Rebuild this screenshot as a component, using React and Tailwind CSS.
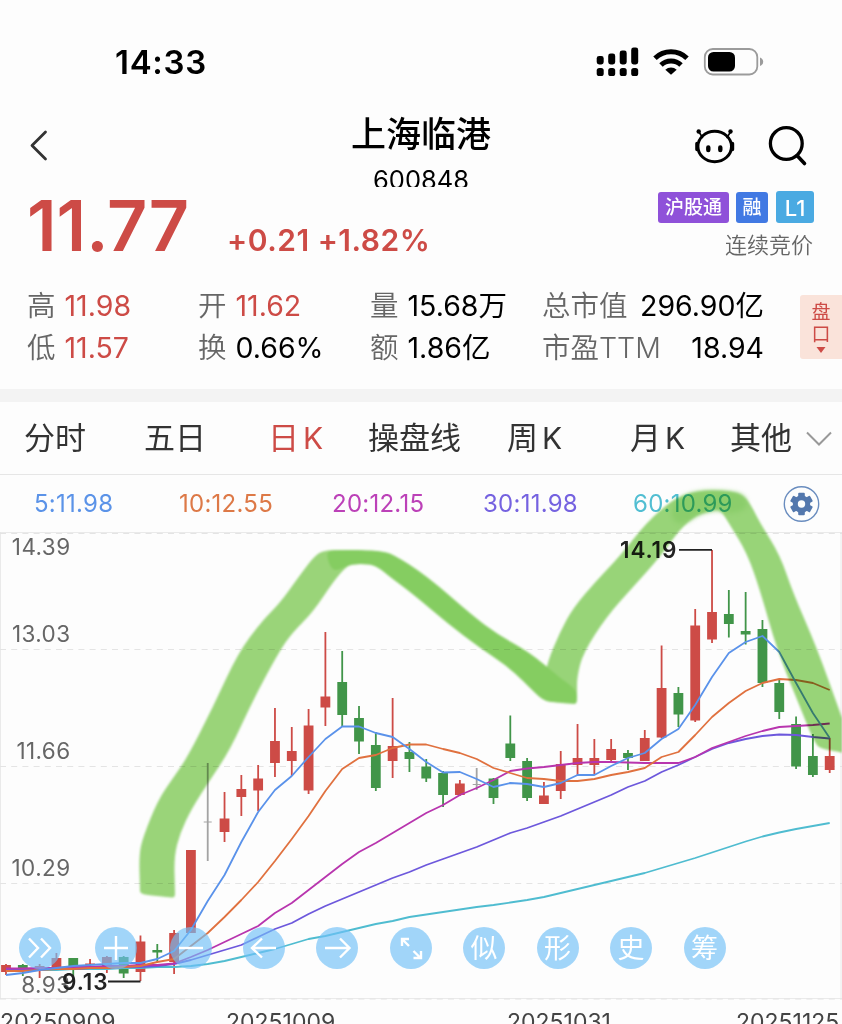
const badges = [
  { label: "沪股通", className: "w-[71px] h-[31px] bg-[#8f51d9]" },
  { label: "融", className: "mr-px w-8 h-[31px] bg-[#4179e3]" },
  { label: "L1", className: "w-[38px] h-8 bg-[#4aaae2] text-[22px]" },
];

const tabs = [
  { label: "分时", className: "w-[120px]" },
  { label: "五日", className: "w-[124px]" },
  { label: "日", k: true, className: "w-[100px] text-[#cd4b46]" },
  { label: "操盘线", className: "w-[139px]" },
  { label: "周", k: true, className: "w-[123px]" },
  { label: "月", k: true, className: "w-[100px]" },
  { label: "其他", className: "w-[75px]" },
];

const averages = [
  { label: "5:11.98", className: "w-[145px] text-[#5b93e8]" },
  { label: "10:12.55", className: "w-[153px] text-[#dd7947]" },
  { label: "20:12.15", className: "w-[151px] text-[#bc41b8]" },
  { label: "30:11.98", className: "w-[150px] text-[#7562e0]" },
  { label: "60:10.99", className: "w-[150px] text-[#51bed2]" },
];

// [color, high, body top, body bottom, low]
const candles = [
  ["r", 964, 965, 972, 975],
  ["g", 964, 965, 970, 976],
  ["r", 964, 966, 970, 978],
  ["r", 953, 958, 968, 969],
  ["g", 958, 958, 967, 976],
  ["r", 959, 963.5, 965, 968],
  ["r", 956, 957, 966, 973],
  ["g", 956, 957, 973.5, 978],
  ["r", 935.5, 941.5, 972, 981],
  ["g", 944, 950, 952.5, 962],
  ["r", 930, 933, 962, 974],
  ["r", 850, 850, 933, 933],
  ["n", 763, 821.5, 822.5, 861],
  ["r", 792, 818.5, 832, 842],
  ["r", 775, 789, 797, 816],
  ["r", 765, 778.5, 790.5, 811],
  ["r", 708, 741, 763, 777],
  ["r", 727, 751, 761, 776],
  ["r", 709, 725.5, 790.5, 794],
  ["r", 632, 696.5, 707.5, 726],
  ["g", 651, 682, 715, 727],
  ["g", 706, 718, 741.5, 754],
  ["g", 732, 745, 788, 791],
  ["r", 698, 746, 761, 778],
  ["g", 742, 752, 759, 772],
  ["g", 759, 766.5, 778.5, 782],
  ["g", 771, 773, 795, 807],
  ["r", 780, 783.5, 795, 796],
  ["n", 768, 784, 785, 790],
  ["g", 778, 778.5, 798, 804],
  ["g", 715.5, 743.5, 758, 761],
  ["g", 758, 761, 798, 801],
  ["r", 782, 795.5, 804, 804],
  ["r", 751, 764, 791, 799],
  ["r", 724, 758, 765, 775],
  ["r", 739, 758, 765, 775],
  ["r", 739, 749, 760, 763],
  ["g", 750, 753, 758, 770],
  ["r", 730, 738, 761, 761],
  ["r", 645.5, 688, 737.5, 738],
  ["g", 687, 693, 714.5, 727],
  ["r", 609, 625.5, 720.5, 722],
  ["r", 550, 612, 639.5, 643],
  ["g", 590, 614, 624, 637.5],
  ["g", 592, 631, 634.5, 644.5],
  ["g", 620, 629, 683, 687],
  ["g", 679, 683, 712, 719],
  ["g", 716.5, 724, 766.5, 769],
  ["g", 734, 756, 775, 777],
  ["r", 738, 756, 770, 773],
];

const candleColors = { r: "#cd4b46", g: "#419549", n: "#a3a3a3" };

const lines = [
  {
    color: "#4fbcd0",
    points: [
      970, 970, 970, 970, 969, 969, 969, 968, 968, 967, 967, 966, 964, 961,
      957, 953, 949, 944, 939, 936, 932, 928, 924, 921, 917, 914.5, 912, 909.5,
      907, 905, 902.5, 900, 897, 893, 889, 885, 881, 877, 873, 868, 863, 858,
      852.5, 847, 841.5, 836.5, 832.5, 829, 826, 823,
    ],
  },
  {
    color: "#6d58dc",
    points: [
      969, 969, 969, 969, 969, 968, 968, 967, 967, 966, 964, 960, 955, 950, 945,
      937, 929, 923, 914, 906, 899, 892, 885, 878, 872, 865, 859, 853, 847, 840,
      833, 828, 822, 816, 809, 802, 795, 787, 781, 772, 765, 757, 749, 743, 739,
      736, 734.5, 735, 737, 738.5,
    ],
  },
  {
    color: "#b835ae",
    points: [
      968.5, 968.5, 968, 968, 967, 967, 966, 966, 965, 965, 963.5, 957, 950,
      942, 934, 926, 913, 903, 890, 877, 864, 852, 843, 833, 823, 813, 805, 795,
      788, 780, 771, 768.5, 767, 765, 763, 762, 762, 762.5, 763, 763, 763, 757,
      748, 742, 736, 731, 727, 726, 725, 723.5,
    ],
  },
  {
    color: "#e0713f",
    points: [
      971, 971, 970, 969, 969, 968, 968, 967, 966, 962, 959, 946, 933, 917, 900,
      882, 861, 839, 816, 791, 769, 758, 755, 748, 744.5, 744.5, 749, 753, 759,
      768, 773, 778, 779, 781, 781, 779, 775, 772, 768, 757, 752, 735, 717, 703,
      691, 683, 679, 680, 683, 690,
    ],
  },
  {
    color: "#5a92ea",
    points: [
      975, 973, 970, 968, 966, 965, 964, 963, 963, 959, 951, 930, 901, 875, 842,
      812, 790, 776, 757, 739, 726.5, 726.5, 733, 737, 749, 762, 772.5, 772,
      779, 787, 783, 784, 787, 783, 775, 775, 766, 758, 753, 739, 729, 705, 677,
      653, 642, 636, 652, 683, 713, 738,
    ],
  },
];

const priceLabels = [
  { label: "14.39", x: 70.5, y: 555 },
  { label: "13.03", x: 70.5, y: 642 },
  { label: "11.66", x: 70.5, y: 759 },
  { label: "10.29", x: 70.5, y: 876 },
  { label: "8.93", x: 70.5, y: 992.5 },
];

const gridRows = [533.5, 649.5, 766.5, 883.5, 999];

const xOf = (index) => 6 + index * 16.81;

const StatusBar = () => (
  <div className="flex h-[94px] items-start pl-[115px] pt-[42px]">
    <span className="w-[481px] text-[33px] font-semibold leading-[41px] tracking-[0.7px] text-black">
      14:33
    </span>
    <svg width="170" height="40" viewBox="596 42 170 40">
      {[0, 1, 2, 3].map((i) => (
        <g key={i}>
          <rect
            x={596.7 + i * 11.5}
            y={[56, 53.5, 50.5, 47.5][i]}
            width="7"
            height={[8.5, 11, 14, 17][i]}
            rx="2.4"
          />
          <rect x={596.7 + i * 11.5} y="68" width="7" height="8" rx="2.6" />
        </g>
      ))}
      <g fill="none" stroke="#000" strokeWidth="5">
        <path d="M655 58.2a23 23 0 0 1 32 0" />
        <path d="M661 65a14.500 14.500 0 0 1 20 0" />
      </g>
      <path d="M665.300 69.700a8.500 8.500 0 0 1 11.400 0l-5.700 5z" />
      <rect
        x="704.8"
        y="49"
        width="52.5"
        height="25.500"
        rx="8"
        fill="none"
        stroke="#9b9b9b"
        strokeWidth="1.8"
      />
      <rect x="708" y="52" width="27" height="19.500" rx="5.500" />
      <path d="M760 57.500q3.200 1.300 3.200 4.300t-3.200 4.300z" fill="#9b9b9b" />
    </svg>
  </div>
);

const TitleBar = () => (
  <div className="flex h-[94px] items-start justify-between pl-[28px] pr-[32px]">
    <svg width="120" height="94" viewBox="28 94 120 94">
      <path
        d="M45.500 132 32 145.500l13.500 13.500"
        fill="none"
        stroke="#333"
        strokeWidth="2.800"
        strokeLinecap="round"
        strokeLinejoin="round"
      />
    </svg>
    <div className="h-[93px] overflow-hidden pt-[14px] text-center text-black">
      <h1 className="text-[35px] font-medium leading-[52px]">上海临港</h1>
      <p className="mt-[4px] text-[25.500px] leading-8">600848</p>
    </div>
    <svg
      width="116"
      height="94"
      viewBox="694 94 116 94"
      fill="none"
      stroke="#000"
      strokeWidth="3"
      strokeLinecap="round"
    >
      <ellipse cx="714.700" cy="146.500" rx="16.800" ry="15.200" />
      <path d="M697 143.500v6M732.400 143.500v6" strokeWidth="3.600" />
      <path d="m699 132 3.500 5.500M730.500 132l-3.500 5.500" strokeWidth="1.600" />
      <circle cx="698.700" cy="131.500" r="2.200" fill="#000" stroke="none" />
      <circle cx="730.500" cy="131.500" r="2.200" fill="#000" stroke="none" />
      <path d="M708.300 147.500v2.500M720.300 147.500v2.500" strokeWidth="4.400" />
      <circle cx="786.300" cy="143.500" r="15.900" strokeWidth="3.300" />
      <path d="m797.500 156 7 7.500" strokeWidth="3.600" />
    </svg>
  </div>
);

const PriceRow = () => (
  <div className="flex h-[96px] items-start pl-[27px]">
    <p className="w-[200px] text-[70px] font-semibold leading-[76px] text-[#cd4b46]">
      11.77
    </p>
    <p className="w-[396px] whitespace-nowrap pt-[32px] text-[30px] font-semibold leading-[41px] tracking-[0.5px] text-[#cd4b46]">
      +0.21 +1.82%
    </p>
    <div className="flex w-[191px] flex-col items-end pt-[3px]">
      <div className="flex items-end gap-[7px]">
        {badges.map((badge) => (
          <span
            key={badge.label}
            className={`flex items-center justify-center rounded-[3px] pt-[2px] text-[19px] font-medium text-white ${badge.className}`}
          >
            {badge.label}
          </span>
        ))}
      </div>
      <span className="mr-px mt-[6px] text-[22px] font-[350] leading-8 text-[#666]">
        连续竞价
      </span>
    </div>
  </div>
);

const Stat = ({ label, value, red }) => (
  <div className="flex h-[42px] items-center gap-[9px] whitespace-nowrap">
    <span className="text-[28.500px] font-[350] text-[#666]">{label}</span>
    <span className={`text-[28.500px] ${red ? "text-[#cd4b46]" : "text-black"}`}>
      {value}
    </span>
  </div>
);

const Stats = () => (
  <div className="flex h-[105px] items-start pl-[27px]">
    <div className="w-[171px] pt-px">
      <Stat label="高" value="11.98" red />
      <Stat label="低" value="11.57" red />
    </div>
    <div className="w-[172px] pt-px">
      <Stat label="开" value="11.62" red />
      <Stat label="换" value="0.66%" />
    </div>
    <div className="w-[172px] pt-px">
      <Stat label="量" value="15.68万" />
      <Stat label="额" value="1.86亿" />
    </div>
    <div className="w-[222px] pt-px [&>div]:justify-between">
      <Stat label="总市值" value="296.90亿" />
      <Stat label="市盈TTM" value="18.94" />
    </div>
    <div className="ml-9 mt-[11px] flex h-16 w-[42px] flex-col items-center rounded-l-[3px] bg-[#fae3da] pt-[7px] text-[19px] leading-[22px] text-[#cd4b46]">
      <span>盘</span>
      <span>口</span>
      <svg className="mt-px" width="10" height="6" viewBox="0 0 10 6">
        <path d="M.5 0h9L5 6z" fill="#cd4b46" />
      </svg>
    </div>
  </div>
);

const Tabs = () => (
  <div className="flex h-[73px] items-center border-b border-[#e6e6e6] pl-[24px] pt-px text-[31px] text-[#333]">
    {tabs.map((tab) => (
      <div
        key={tab.label}
        className={`flex items-baseline gap-[4px] whitespace-nowrap ${tab.className}`}
      >
        <span>{tab.label}</span>
        {tab.k && <span className="text-[30px]">K</span>}
      </div>
    ))}
    <svg width="28" height="16" viewBox="0 0 28 16">
      <path d="m2 1.500 12 12 12-12" fill="none" stroke="#999" strokeWidth="2" />
    </svg>
  </div>
);

const Legend = () => (
  <div className="flex h-[57px] items-center pl-[34px] text-[24px] tracking-[0.25px]">
    {averages.map((item) => (
      <span key={item.label} className={`pt-px ${item.className}`}>
        {item.label}
      </span>
    ))}
    <svg width="38" height="38" viewBox="-18.5 -19 38 38">
      <circle r="17.200" fill="none" stroke="#6a8dbf" strokeWidth="1.400" />
      <g fill="#5478ad">
        {[0, 60, 120].map((deg) => (
          <rect
            key={deg}
            x="-3.300"
            y="-11.300"
            width="6.600"
            height="22.600"
            rx="1"
            transform={`rotate(${deg})`}
          />
        ))}
        <circle r="8.700" />
      </g>
      <circle r="3.700" fill="#fdfdfd" />
    </svg>
  </div>
);

const Plot = () => (
  <svg className="block" width="842" height="468" viewBox="0 532 842 468">
    <g stroke="#e4e4e4">
      <path d="M0 532.500h842M.5 532v467M841 532v467M0 998.500h842" fill="none" strokeWidth="0.8" />
      {gridRows.map((y) => (
        <path key={y} d={`M0 ${y}h842`} strokeDasharray="6 5.200" strokeWidth="1.200" />
      ))}
    </g>
    {candles.map(([color, high, top, bottom, low], i) => (
      <g key={i} fill={candleColors[color]}>
        <rect x={xOf(i) - 0.9} y={high} width="1.8" height={low - high} />
        <rect
          x={xOf(i) - (color === "n" ? 4 : 4.9)}
          y={top}
          width={color === "n" ? 8 : 9.8}
          height={bottom - top}
        />
      </g>
    ))}
    {lines.map((line) => (
      <polyline
        key={line.color}
        points={line.points.map((y, i) => `${xOf(i)},${y}`).join(" ")}
        fill="none"
        stroke={line.color}
        strokeWidth="1.8"
        strokeLinejoin="round"
      />
    ))}
    <g fontSize="22.500" fill="#666" textAnchor="end" letterSpacing="0.4">
      {priceLabels.map((item) => (
        <text key={item.label} x={item.x} y={item.y}>
          {item.label}
        </text>
      ))}
    </g>
    <g fontSize="22.500" fontWeight="600" fill="#222" letterSpacing="0.9">
      <text x="620" y="558">14.19</text>
      <text x="62" y="990">9.13</text>
    </g>
    <path d="M679 549.800h33M108 981.500h32.500" stroke="#222" strokeWidth="1.800" />
  </svg>
);

const strokes = [
  {
    color: "#9bd67a",
    points: [
      [140, 893], [140, 889], [139, 855], [143, 837], [158, 800], [173, 778],
      [187, 758], [213, 707], [238, 653], [262, 621], [280, 603], [300, 575],
      [316, 554], [327, 550], [345, 550], [370, 550], [370, 564], [352, 564],
      [345, 568], [333, 582], [313, 612], [293, 632], [280, 650], [253, 700],
      [230, 750], [210, 780], [192, 808], [180, 833], [174, 857], [175, 890],
      [175, 898], [168, 897], [146, 895],
    ],
  },
  {
    color: "#86cf62",
    points: [
      [325, 551], [340, 550], [363, 550], [380, 551], [393, 554], [427, 576],
      [473, 616], [497, 634], [527, 651], [545, 665], [560, 678], [577, 690],
      [577, 703], [573, 703], [550, 702], [543, 700], [535, 693], [510, 668],
      [480, 648], [447, 623], [413, 594], [390, 577], [378, 567], [368, 564],
      [352, 564], [345, 567], [332, 572],
    ],
  },
  {
    color: "#99d679",
    points: [
      [543, 700], [543, 688], [547, 663], [560, 632], [573, 608], [597, 580],
      [620, 556], [647, 522], [670, 502], [683, 495], [697, 491], [713, 490],
      [730, 491], [742, 494], [750, 503], [760, 523], [780, 555], [793, 593],
      [817, 648], [842, 718], [850, 740], [850, 755], [840, 752], [822, 749],
      [815, 744], [800, 707], [777, 650], [760, 590], [747, 553], [730, 525],
      [720, 509], [712, 511], [697, 515], [680, 529], [660, 557], [633, 587],
      [607, 616], [583, 653], [577, 677], [577, 693], [577, 704], [572, 704],
      [552, 702],
    ],
  },
  {
    color: "#8ccf6c",
    points: [
      [672, 505], [683, 496], [697, 491.5], [713, 490.5], [730, 491.5],
      [742, 494], [748, 502], [745, 510], [730, 514], [719, 510], [710, 511],
      [697, 515], [683, 525], [672, 520],
    ],
  },
];

// Closed curve that runs through the midpoints of the outline
const smoothPath = (points) => {
  const mid = ([ax, ay], [bx, by]) => `${(ax + bx) / 2} ${(ay + by) / 2}`;
  const start = mid(points[points.length - 1], points[0]);
  const curves = points.map(([x, y], i) => {
    const next = points[(i + 1) % points.length];
    return `Q${x} ${y} ${mid([x, y], next)}`;
  });
  return `M${start}${curves.join("")}Z`;
};

// Freehand highlighter strokes over the two peaks
const Marker = () => (
  <svg
    className="pointer-events-none absolute inset-0 mix-blend-multiply blur-[1px]"
    width="842"
    height="549"
    viewBox="0 475 842 549"
  >
    <path d={smoothPath(strokes[0].points)} fill={strokes[0].color} />
    <path d={smoothPath(strokes[2].points)} fill={strokes[2].color} />
    <path d={smoothPath(strokes[1].points)} fill={strokes[1].color} />
    <path
      className="blur-[2px]"
      d={smoothPath(strokes[3].points)}
      fill={strokes[3].color}
    />
  </svg>
);

const toolButtons = [
  { icon: "M-11-9.500-2 0l-9 9.500M1-9.500 10 0 1 9.500", className: "mr-[34px]" },
  { icon: "M-12 0h24M0-12v24", className: "mr-[32.500px]" },
  { icon: "M-12 0h24", className: "mr-[31px]" },
  { icon: "M12 0h-24M-2-9.500-12 0l10 9.500", className: "mr-[31.500px]" },
  { icon: "M-12 0h24M3-9.500 12.500 0 3 9.500", className: "mr-[31.500px]" },
  { icon: "M-2-2l-7-7M-9-2v-7h7M2.500 3l7 7M2.500 10h7.500v-7", className: "mr-[31.500px]" },
  { label: "似", className: "mr-[31.500px]" },
  { label: "形", className: "mr-[31.500px]" },
  { label: "史", className: "mr-[31.500px]" },
  { label: "筹", className: "" },
];

const ToolButtons = () => (
  <div className="absolute left-[19px] top-[452px] flex">
    {toolButtons.map((button, i) => (
      <button
        key={i}
        className={`flex h-[42px] w-[42px] items-center justify-center rounded-full bg-[#70c0f7]/65 text-[27px] leading-none text-white ${button.className}`}
      >
        {button.icon ? (
          <svg width="30" height="30" viewBox="-15 -15 30 30">
            <path d={button.icon} fill="none" stroke="#fff" strokeWidth="2.400" />
          </svg>
        ) : (
          button.label
        )}
      </button>
    ))}
  </div>
);

const DateAxis = () => (
  <div className="flex pt-[8px] text-[23px] leading-7 text-[#444]">
    <span className="w-[226px] tracking-[0.2px]">20250909</span>
    <span className="w-[281px]">20251009</span>
    <span className="w-[229px]">20251031</span>
    <span>20251125</span>
  </div>
);

export default function App() {
  return (
    <div className="h-[1024px] w-[842px] overflow-hidden bg-[#fdfdfd] font-['Inter','Noto_Sans_CJK_SC',sans-serif]">
      <StatusBar />
      <TitleBar />
      <PriceRow />
      <Stats />
      <div className="h-[13px] bg-[#f3f3f3]" />
      <Tabs />
      <div className="relative h-[549px] overflow-hidden">
        <Legend />
        <Plot />
        <DateAxis />
        <ToolButtons />
        <Marker />
      </div>
    </div>
  );
}
